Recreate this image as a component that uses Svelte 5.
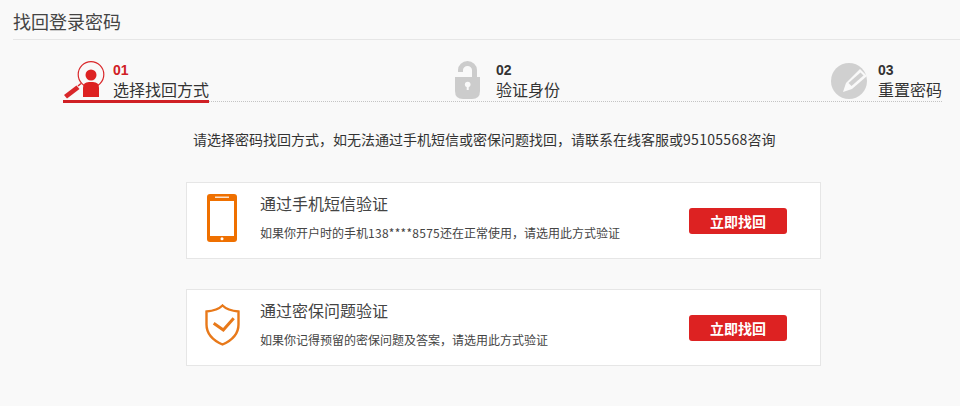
<script>
  const methods = [
    { icon: 'phone', title: '通过手机短信验证', before: '如果你开户时的手机', num: '138****8575', after: '还在正常使用，请选用此方式验证' },
    { icon: 'shield', title: '通过密保问题验证', before: '如果你记得预留的密保问题及答案，请选用此方式验证', num: '', after: '' }
  ]
</script>

<div class="page">
  <h1 class="title">找回登录密码</h1>

  <div class="steps">
    <div class="step step-one active">
      <svg class="icon" width="44" height="39" viewBox="0 0 44 39">
        <circle cx="28" cy="13.500" r="12.800" fill="none" stroke="#d9272a" stroke-width="1.200" />
        <circle cx="28" cy="14" r="5.500" fill="#dd2222" />
        <path d="M20 36v-9q0-6 6-6h4q6 0 6 6v9z" fill="#dd2222" />
        <path d="M1 34l12.500-9.500 3 3.500-12.500 9.500z" fill="#d9272a" />
        <path d="M15 25l3-2.500" stroke="#d9272a" stroke-width="1.500" />
      </svg>
      <div class="info">
        <div class="num">01</div>
        <div class="label">选择找回方式</div>
      </div>
    </div>
    <div class="step step-two">
      <svg class="icon" width="26" height="39" viewBox="0 0 26 39">
        <path d="M3 11v-2a9.500 9 0 0 1 19 0v8h-5v-8a4.500 4 0 0 0-9 0v2z" fill="#cccccc" />
        <path d="M0 16h25v14q0 8-8 8h-9q-8 0-8-8z" fill="#cccccc" />
        <circle cx="12.700" cy="23.500" r="2.800" fill="#f9f9f9" />
        <path d="M11.700 24h2v5h-2z" fill="#f9f9f9" />
      </svg>
      <div class="info">
        <div class="num">02</div>
        <div class="label">验证身份</div>
      </div>
    </div>
    <div class="step step-three">
      <svg class="icon" width="37" height="39" viewBox="0 0 37 39">
        <circle cx="18" cy="20" r="18" fill="#d0d0d0" />
        <path d="M29 8l7 7-15 13-9 3 3-9z" fill="#f9f9f9" />
        <path d="M29.500 11.500l3 3-12 10.500-3-3z" fill="#d0d0d0" />
      </svg>
      <div class="info">
        <div class="num">03</div>
        <div class="label">重置密码</div>
      </div>
    </div>
  </div>

  <p class="intro">请选择密码找回方式，如无法通过手机短信或密保问题找回，请联系在线客服或<span class="digits">95105568</span>咨询</p>

  <div class="methods">
    {#each methods as m}
      <div class="card">
        <div class="card-icon">
          {#if m.icon === 'phone'}
            <svg width="30" height="48" viewBox="0 0 30 48">
              <rect width="30" height="48" rx="3" fill="#ef7000" />
              <rect x="3" y="7" width="24" height="35" fill="#fff" />
              <rect x="8" y="2.500" width="14" height="1.500" fill="#fff" opacity="0.8" />
              <circle cx="15" cy="44.700" r="1.500" fill="#fff" />
            </svg>
          {:else}
            <svg width="35" height="42" viewBox="0 0 35 42">
              <path d="M17.500 1.500q5 5 16 6v13q0 13-16 20q-16-7-16-20v-13q11-1 16-6z" fill="none" stroke="#e8791a" stroke-width="2.400" />
              <path d="M8.700 19.300l9.600 6.700 10.400-11.700" fill="none" stroke="#e8791a" stroke-width="3" />
            </svg>
          {/if}
        </div>
        <div class="card-text">
          <div class="card-title">{m.title}</div>
          <div class="card-desc">{m.before}<span class="card-num">{m.num}</span>{m.after}</div>
        </div>
        <button class="btn">立即找回</button>
      </div>
    {/each}
  </div>
</div>

<style>
  :global(body) {
    margin: 0;
    background: #f9f9f9;
  }

  .page {
    height: 406px;
    overflow: hidden;
    font-family: "Noto Sans CJK SC", "Liberation Sans", sans-serif;
    color: #333;
  }

  .title {
    margin: 0 0 0 13px;
    height: 39px;
    line-height: 43px;
    font-size: 18px;
    font-weight: 400;
    color: #444;
    border-bottom: 1px solid #e6e6e6;
  }

  .steps {
    display: flex;
    margin: 0 17px 0 63px;
    padding-top: 21px;
    height: 41px;
    background: repeating-linear-gradient(to right, #c4c4c4 0 1px, transparent 1px 2px) left bottom / 100% 1px no-repeat;
  }

  .step {
    display: flex;
    height: 41px;
    box-sizing: border-box;
  }

  .step-one {
    width: 146px;
    margin-right: 246px;
    border-bottom: 3px solid #d02025;
    height: 42px;
  }

  .step-two {
    width: 106px;
    margin-right: 270px;
  }

  .icon {
    flex: none;
  }

  .step-one .icon {
    margin-right: 6px;
  }

  .step-two .icon {
    margin-right: 15px;
  }

  .step-three .icon {
    margin: 0 10px 0 0;
  }

  .num {
    font-family: "Liberation Sans", sans-serif;
    font-size: 14px;
    font-weight: 700;
    line-height: 16px;
    margin-top: 1px;
  }

  .active .num {
    color: #d02025;
  }

  .label {
    font-size: 16px;
    line-height: 22px;
    white-space: nowrap;
  }

  .intro {
    margin: 27px 0 0 193px;
    font-size: 14px;
    line-height: 20px;
    white-space: nowrap;
  }

  .digits {
    letter-spacing: 0.3px;
  }

  .methods {
    display: flex;
    flex-direction: column;
    gap: 30px;
    margin: 33px 0 0 186px;
    width: 635px;
  }

  .card {
    display: flex;
    align-items: center;
    height: 77px;
    box-sizing: border-box;
    background: #fff;
    border: 1px solid #e6e6e6;
  }

  .card-icon {
    width: 73px;
    display: flex;
    justify-content: center;
    padding: 0 3px 5px 0;
    box-sizing: border-box;
  }

  .card-text {
    flex: 1;
    padding-bottom: 7px;
  }

  .card-title {
    font-size: 16px;
    line-height: 22px;
    color: #444;
  }

  .card-desc {
    margin-top: 10px;
    font-size: 12px;
    line-height: 18px;
    color: #444;
  }

  .card-num {
    letter-spacing: 0.27px;
  }

  .btn {
    width: 98px;
    height: 26px;
    margin-right: 33px;
    padding: 0;
    border: none;
    border-radius: 3px;
    background: #dd2222;
    color: #fff;
    font-family: inherit;
    font-size: 14px;
    font-weight: 700;
    line-height: 26px;
  }
</style>
